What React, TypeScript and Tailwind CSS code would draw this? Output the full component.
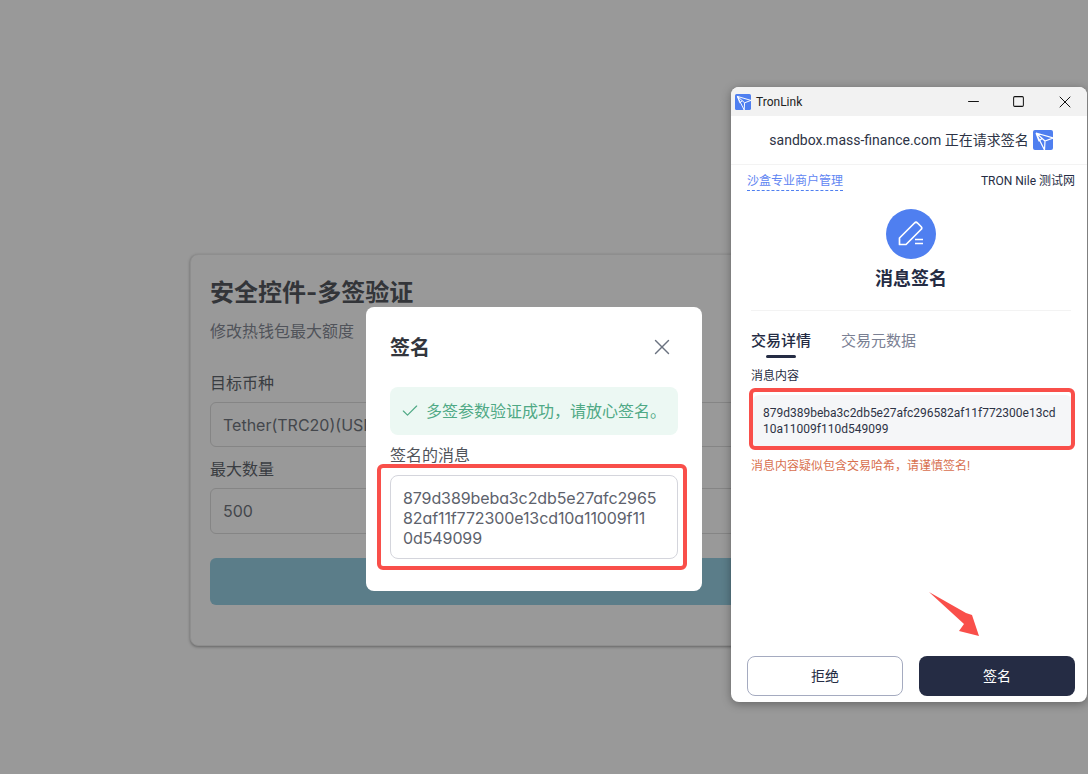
import { Check, Minus, Square, X } from "lucide-react";

const HASH = "879d389beba3c2db5e27afc296582af11f772300e13cd10a11009f110d549099";
const CJK = '"Noto Sans CJK SC"';

function TronLogo({ className }: { className: string }) {
  return (
    <svg viewBox="0 0 20 20" className={className}>
      <rect width="20" height="20" rx="2" fill="#4f7ff0" />
      <path
        d="M3 3 L20 8 M3 3 L11.5 20 M3 3 L12 11 L20 8 M12 11 L11.5 20 M3 3 L6 11 L9 8.5"
        fill="none"
        stroke="#fff"
        strokeWidth="1.2"
        strokeLinejoin="round"
      />
    </svg>
  );
}

function BackgroundCard() {
  return (
    <div className="ml-[190px] w-[688px] h-[392px] rounded-lg border border-[#8e8e8e] bg-[#999999] px-[19px] pt-[22px] shadow-[0_1px_3px_rgba(0,0,0,0.35)]">
      <h1 className="text-2xl leading-8 font-bold text-[#333539]">安全控件-多签验证</h1>
      <p className="mt-[10px] text-base leading-6 text-[#50535a]">修改热钱包最大额度</p>
      <label className="block mt-[28px] text-base leading-6 text-[#3a3d42]">目标币种</label>
      <div className="mt-[7px] h-[45px] flex items-center rounded-md border border-[#858585] px-3 text-base text-[#44474c]">
        Tether(TRC20)(USDT)
      </div>
      <label className="block mt-[10px] text-base leading-6 text-[#3a3d42]">最大数量</label>
      <div className="mt-[7px] h-[46px] flex items-center rounded-md border border-[#858585] px-3 text-base text-[#44474c]">
        500
      </div>
      <div className="mt-6 h-[47px] rounded-md bg-[#5b7d89]" />
    </div>
  );
}

function SignModal() {
  return (
    <div className="absolute left-[366px] top-[307px] w-[336px] h-[284px] rounded-lg bg-white px-6 pt-[25px]">
      <div className="flex items-center justify-between h-8">
        <h2 className="text-xl font-bold text-[#33363d]">签名</h2>
        <X className="mr-[3px] -mt-[2px] size-[26px] text-[#6b7280]" strokeWidth={1.3} />
      </div>
      <div className="mt-[23px] flex h-12 items-center gap-[6px] rounded-lg bg-[#ecf8f3] pl-[10px] text-base text-[#4fa985]">
        <Check className="size-5" strokeWidth={1.4} />
        {"多签参数验证成功\uFF0C请放心签名。"}
      </div>
      <p className="mt-2 text-base leading-6 text-[#50535a]">签名的消息</p>
      <div className="mt-2 h-[84px] rounded-lg border border-[#d4d5dc] px-3 py-[12px] text-base leading-5 tracking-[-0.1px] text-[#5d626c]">
        {HASH.slice(0, 27)}
        <br />
        {HASH.slice(27, 56)}
        <br />
        {HASH.slice(56)}
      </div>
      {/* annotation drawn on the screenshot */}
      <div className="absolute left-[11px] top-[157px] w-[310px] h-[106px] rounded-md border-[4px] border-[#f94f4a]" />
    </div>
  );
}

function TronLinkWindow() {
  return (
    <div
      className="absolute left-[731px] top-[87px] w-[356px] h-[615px] rounded-lg overflow-hidden bg-white shadow-[0_2px_10px_rgba(0,0,0,0.35)]"
      style={{ fontFamily: `Roboto, ${CJK}, sans-serif`, fontFeatureSettings: "normal" }}
    >
      <div className="flex h-[29px] items-center bg-[#f2f2f2] pl-1">
        <TronLogo className="size-4" />
        <span className="ml-[5px] text-xs text-[#222]">TronLink</span>
        <div className="ml-auto flex items-center text-[#111]">
          <Minus className="size-[17px] mr-[30px]" strokeWidth={1.4} />
          <Square className="size-[13px] mr-[30px]" strokeWidth={1.85} />
          <X className="size-[20px] mr-[12px]" strokeWidth={1.2} />
        </div>
      </div>
      <div className="flex h-[49px] items-center justify-center gap-1 border-b border-[#f3f3f3] pl-1 text-sm text-[#2d3345]">
        <span>sandbox.mass-finance.com 正在请求签名</span>
        <TronLogo className="size-5" />
      </div>
      <div className="flex items-start justify-between pl-4 pr-3 pt-2 text-xs">
        <span className="border-b border-dashed border-[#4f7ff0] leading-[17px] text-[#5f86f2]">沙盒专业商户管理</span>
        <span className="leading-4 text-[#252c44]">TRON Nile 测试网</span>
      </div>
      <div className="mt-[18px] flex justify-center pl-1">
        <div className="flex size-[50px] items-center justify-center rounded-full bg-[#4f7ff0]">
          <svg viewBox="0 0 30 30" className="size-[30px]" fill="none" stroke="#fff" strokeWidth="1.7" strokeLinejoin="round">
            <path d="M3.5 19 L18.5 4 Q20 2.5 21.5 4 L25 7.5 Q26.5 9 25 10.5 L10 25.5 L3.5 25.5 Z" />
            <path d="M19 20.5 H27 M19 24.5 H27" />
          </svg>
        </div>
      </div>
      <h2 className="mt-2 pl-1 text-center text-lg leading-6 font-bold text-[#252c44]">消息签名</h2>
      <div className="ml-5 mr-4 mt-[19px] border-t border-[#f3f3f3]" />
      <div className="mt-5 flex gap-[30px] px-5 text-[15px] leading-5">
        <div className="relative font-medium text-[#252c44]">
          交易详情
          <div className="absolute left-[15px] top-[24px] h-[3px] w-[30px] rounded-full bg-[#252c44]" />
        </div>
        <div className="text-[#7a8093]">交易元数据</div>
      </div>
      <p className="mt-[17px] px-5 text-xs leading-4 text-[#252c44]">消息内容</p>
      <div className="relative ml-[22px] mr-[15px] mt-[11px] h-[52px] rounded-md bg-[#f5f6f8] pl-[10px] pr-3 pt-[10px] text-xs leading-4 break-all text-[#2d3345]">
        {HASH}
        <div className="absolute -left-[4px] -top-[7px] w-[326px] h-[62px] rounded-md border-[4px] border-[#f94f4a]" />
      </div>
      <p className="mt-[11px] px-5 text-xs leading-4 text-[#d8704f]">{"消息内容疑似包含交易哈希\uFF0C请谨慎签名!"}</p>
      <div className="absolute left-4 top-[569px] flex gap-4">
        <button className="h-10 w-[156px] rounded-lg border border-[#a5abc0] bg-white text-sm text-[#252c44]">拒绝</button>
        <button className="h-10 w-[156px] rounded-lg bg-[#252c44] text-sm text-white">签名</button>
      </div>
      <svg viewBox="0 0 60 54" className="absolute left-[193px] top-[502px] w-[60px] h-[54px]">
        <path d="M5 3 L42 24 L48 26 L55 47 L35 42 L40 35 Z" fill="#f94f4a" />
      </svg>
    </div>
  );
}

export default function App() {
  return (
    <div
      className="relative h-[774px] w-[1088px] overflow-hidden bg-[#999999] pt-[254px] [font-feature-settings:'cv11']"
      style={{ fontFamily: `Inter, ${CJK}, sans-serif` }}
    >
      <BackgroundCard />
      <SignModal />
      <TronLinkWindow />
    </div>
  );
}
